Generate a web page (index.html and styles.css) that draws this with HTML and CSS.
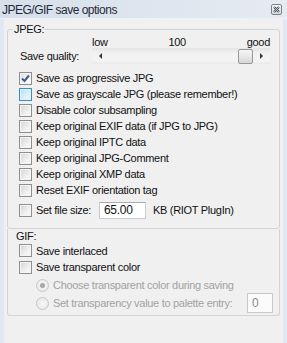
FILE: index.html
```html
<!DOCTYPE html>
<html lang="en">
<head>
  <meta charset="UTF-8" />
  <title>JPEG/GIF save options</title>
  <link rel="stylesheet" href="styles.css">
</head>
<body>
  <div class="window">
    <div class="titlebar">
      <span class="title">JPEG/GIF save options</span>
      <span class="close">
        <svg width="11" height="11" viewBox="0 0 11 11">
          <defs>
            <linearGradient id="cg" x1="0" y1="0" x2="0" y2="1">
              <stop offset="0" stop-color="#fbfbfb" />
              <stop offset="1" stop-color="#d6dbe2" />
            </linearGradient>
          </defs>
          <rect x="0.5" y="0.5" width="10" height="10" rx="1.5" fill="url(#cg)" stroke="#7d8187" />
          <path d="M3 3 L8 8 M8 3 L3 8" stroke="#4b4f55" stroke-width="2.2" />
          <path d="M3 3 L8 8 M8 3 L3 8" stroke="#e8ebef" stroke-width="0.7" />
        </svg>
      </span>
    </div>

    <div class="client">
      <fieldset class="group">
        <legend>JPEG:</legend>
        <div class="scale"><span>low</span><span>100</span><span>good</span></div>
        <div class="quality">
          <span class="qlabel">Save quality:</span>
          <div class="scroll">
            <span class="arrow left"></span>
            <div class="track"><span class="thumb"></span></div>
            <span class="arrow right"></span>
          </div>
        </div>

        <div class="opts">
          <label class="row"><span class="cb checked"><svg width="9" height="9" viewBox="0 0 9 9"><path d="M1 4.5 L3.5 7 L8 1.5" fill="none" stroke="#3e5a8e" stroke-width="2" /></svg></span>Save as progressive JPG</label>
          <label class="row"><span class="cb hot"></span>Save as grayscale JPG (please remember!)</label>
          <label class="row"><span class="cb"></span>Disable color subsampling</label>
          <label class="row"><span class="cb"></span>Keep original EXIF data (if JPG to JPG)</label>
          <label class="row"><span class="cb"></span>Keep original IPTC data</label>
          <label class="row"><span class="cb"></span>Keep original JPG-Comment</label>
          <label class="row"><span class="cb"></span>Keep original XMP data</label>
          <label class="row"><span class="cb"></span>Reset EXIF orientation tag</label>
        </div>

        <div class="row filesize">
          <span class="cb"></span>
          <span class="fs-label">Set file size:</span>
          <span class="edit size">65.00</span>
          <span>KB (RIOT PlugIn)</span>
        </div>
      </fieldset>

      <div class="group gif">
        <div class="caption">GIF:</div>
        <label class="row r-inter"><span class="cb"></span>Save interlaced</label>
        <label class="row r-tall"><span class="cb"></span>Save transparent color</label>
        <label class="row r-tall sub disabled"><span class="radio on"></span>Choose transparent color during saving</label>
        <div class="row r-tall sub disabled">
          <span class="radio"></span>
          <span class="pal-label">Set transparency value to palette entry:</span>
          <span class="edit palette">0</span>
        </div>
      </div>
    </div>
  </div>
</body>
</html>
```

FILE: styles.css
```css
body {
  margin: 0;
  background: #f0f0f0;
  font-family: "Liberation Sans", Arial, sans-serif;
  font-size: 11px;
  letter-spacing: -0.3px;
  color: #111;
}

.window { width: 287px; height: 343px; display: flex; flex-direction: column; }

.titlebar {
  height: 19px;
  display: flex;
  align-items: center;
  justify-content: space-between;
  padding: 0 4px 0 2px;
  background: linear-gradient(to right, #d6dfea, #dfe6ef 60%, #e6ebf2);
  border-bottom: 1px solid #eef2f7;
  box-sizing: border-box;
}
.title { font-size: 12px; letter-spacing: -0.5px; color: #1f2a38; padding-top: 1px; }
.close { display: flex; margin-right: 1px; margin-top: 1px; }

.client {
  flex: 1;
  background: #f0f0f0;
  border-left: 4px solid #e1e8f1;
  border-right: 4px solid #e1e8f1;
}

.group {
  margin: 3px 3px 0;
  padding: 0 0 8px;
  border: 1px solid #d3d3d3;
  border-radius: 3px;
  min-width: 0;
}
.group legend { margin-left: 5px; padding: 0 1px; line-height: 14px; }

.scale {
  height: 12px;
  margin-left: 84px;
  width: 178px;
  display: flex;
  justify-content: space-between;
  align-items: center;
}

.quality { height: 16px; display: flex; align-items: center; padding-left: 12px; }
.qlabel { width: 72px; }

.scroll {
  width: 178px;
  height: 16px;
  display: flex;
  background: linear-gradient(#e4e4e4, #f2f2f2 35%, #f4f4f4 80%, #e9e9e9);
}
.arrow { width: 17px; display: flex; align-items: center; justify-content: center; }
.arrow::before { content: ""; border: 3px solid transparent; }
.arrow.left::before { border-right: 3px solid #333; border-left: 0; }
.arrow.right::before { border-left: 3px solid #333; border-right: 0; }
.track { flex: 1; display: flex; justify-content: flex-end; align-items: center; }
.thumb {
  width: 13px;
  height: 13px;
  border: 1px solid #979797;
  border-radius: 2px;
  background: linear-gradient(#f6f6f6, #e8e8e8 50%, #d6d6d6);
}

.opts { margin-top: 6px; }
.row { height: 16px; display: flex; align-items: center; padding-left: 11px; white-space: nowrap; }

.cb {
  width: 11px;
  height: 11px;
  margin-right: 4px;
  border: 1px solid #8e8f8f;
  background: linear-gradient(135deg, #d2d2d2, #f0f0f0 60%, #fbfbfb);
  box-shadow: inset 0 0 0 1px #f4f4f4;
  display: flex;
  align-items: center;
  justify-content: center;
  flex: none;
}
.cb.checked { background: linear-gradient(135deg, #dcdcdc, #f6f6f6 60%, #fff); }
.cb.hot {
  border-color: #3c8dc0;
  background: linear-gradient(135deg, #b9dcf2, #dff0fb 60%, #eef8fe);
  box-shadow: inset 0 0 0 1px #def0fb;
}

.filesize { height: 20px; margin-top: 2px; }
.fs-label { width: 63px; }
.edit {
  box-sizing: border-box;
  background: #fff;
  border: 1px solid #c9cdd3;
  border-top-color: #a9adb3;
  padding-left: 4px;
  display: flex;
  align-items: center;
}
.edit.size { width: 47px; height: 17px; margin-right: 7px; font-size: 12px; }

.gif { border-top: 0; border-radius: 0 0 3px 3px; margin-top: 0; padding-bottom: 3px; }
.caption { height: 14px; line-height: 14px; padding-left: 8px; }
.r-inter { height: 15px; }
.r-tall { height: 18px; }
.sub { padding-left: 28px; }
.disabled { color: #a2a2a2; }

.radio {
  width: 11px;
  height: 11px;
  margin-right: 4px;
  border: 1px solid #c6c6c6;
  border-radius: 50%;
  background: radial-gradient(circle, #f7f7f7, #e6e6e6);
  display: flex;
  align-items: center;
  justify-content: center;
  flex: none;
}
.radio.on::before { content: ""; width: 5px; height: 5px; border-radius: 50%; background: #a7a7a7; }

.pal-label { width: 194px; }
.edit.palette { width: 26px; height: 20px; color: #8a8a8a; border-color: #c9c9c9; background: #fbfbfb; font-size: 12px; align-items: flex-start; padding-top: 2px; }
```
